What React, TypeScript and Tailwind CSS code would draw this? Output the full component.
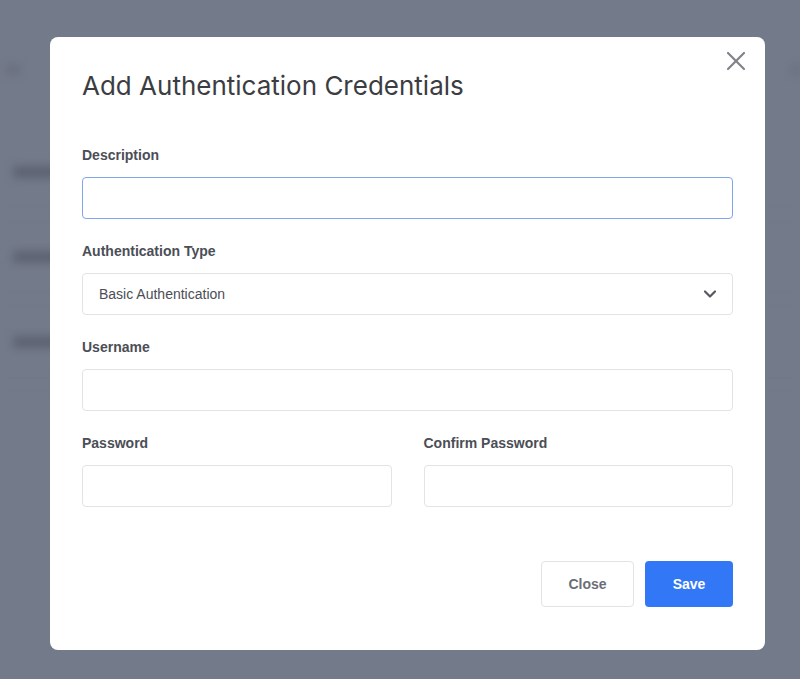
import { X, ChevronDown } from "lucide-react";

const labelCls =
  "block text-[14px] leading-5 font-bold text-[#4b4e56] [font-family:'Liberation_Sans',Arial,sans-serif]";
const inputCls =
  "mt-3 block h-[42px] w-full rounded-[4px] border border-[#e1e3e6] bg-white px-4 text-[14px] text-[#4b4e56] outline-none";

const Field = ({ label, focused }: { label: string; focused?: boolean }) => (
  <div>
    <label className={labelCls}>{label}</label>
    <input
      className={
        focused
          ? "mt-3 block h-[42px] w-full rounded-[4px] border border-[#7fa6ea] bg-white px-4 text-[14px] text-[#4b4e56] outline-none"
          : inputCls
      }
    />
  </div>
);

const BackdropRow = () => (
  <div className="flex h-[85px] items-center justify-between border-b border-[#7b8292] pl-[13px]">
    <div className="h-[12px] w-[45px] rounded bg-[#5d6371]" />
  </div>
);

const App = () => {
  return (
    <div className="relative h-[679px] w-[800px] overflow-hidden bg-[#737a89] [font-family:'Liberation_Sans',Arial,sans-serif]">
      {/* blurred page behind the overlay */}
      <div className="flex flex-col pt-[66px] blur-[4px]">
        <div className="flex h-[64px] items-start justify-between pl-[6px]">
          <div className="h-[8px] w-[14px] rounded bg-[#666c7a]" />
          <div className="h-[8px] w-[8px] rounded bg-[#666c7a]" />
        </div>
        <BackdropRow />
        <BackdropRow />
        <BackdropRow />
      </div>

      {/* modal */}
      <div className="absolute left-[50px] top-[37px] h-[613px] w-[715px] rounded-[8px] bg-white px-8 pt-[33px]">
        <button className="absolute right-[13px] top-[8px] text-[#80838a]">
          <X size={32} strokeWidth={1.6} />
        </button>

        <h2 className="text-[26px] leading-8 font-normal text-[#3b3d42] [font-family:Inter,'Liberation_Sans',sans-serif]">
          Add Authentication Credentials
        </h2>

        <div className="mt-[43px] flex flex-col gap-[22px]">
          <Field label="Description" focused />

          <div>
            <label className={labelCls}>Authentication Type</label>
            <div className="mt-3 flex h-[42px] w-full items-center justify-between rounded-[4px] border border-[#e1e3e6] bg-white pl-4 pr-[12px]">
              <span className="text-[14px] text-[#4b4e56]">Basic Authentication</span>
              <ChevronDown size={20} strokeWidth={2.6} className="text-[#55585f]" />
            </div>
          </div>

          <Field label="Username" />

          <div className="grid grid-cols-2 gap-8">
            <Field label="Password" />
            <Field label="Confirm Password" />
          </div>
        </div>

        <div className="mt-[54px] flex justify-end gap-[11px]">
          <button className="h-[46px] w-[93px] rounded-[4px] border border-[#e2e3e6] bg-white text-[14px] font-bold text-[#6b6e75]">
            Close
          </button>
          <button className="h-[46px] w-[88px] rounded-[4px] bg-[#3278f6] text-[14px] font-bold text-white">
            Save
          </button>
        </div>
      </div>
    </div>
  );
};

export default App;
